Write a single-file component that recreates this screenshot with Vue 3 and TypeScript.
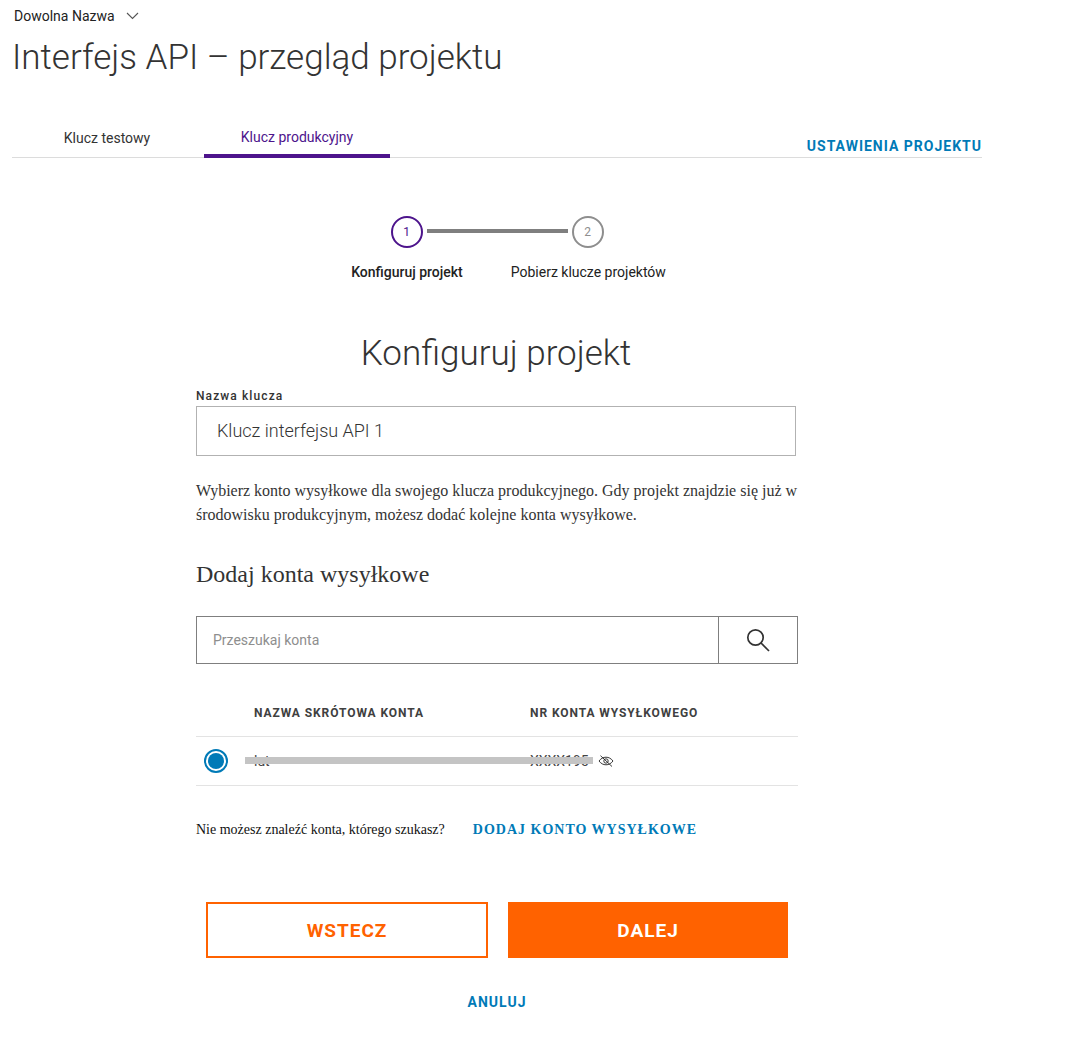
<script setup lang="ts">
const steps = [
  { n: 1, label: 'Konfiguruj projekt', active: true },
  { n: 2, label: 'Pobierz klucze projektów', active: false },
]
</script>

<template>
  <div class="page">
    <div class="switcher">
      <span>Dowolna Nazwa</span>
      <svg width="13" height="8" viewBox="0 0 13 8" fill="none"><path d="M1 1l5.500 5.500L12 1" stroke="#555" stroke-width="1.1" /></svg>
    </div>
    <h1 class="title">Interfejs API – przegląd projektu</h1>

    <div class="tabs">
      <div class="tab tab-test">Klucz testowy</div>
      <div class="tab tab-prod">Klucz produkcyjny</div>
      <a class="settings">USTAWIENIA PROJEKTU</a>
    </div>

    <div class="stepper">
      <div class="circles">
        <div class="circle active">1</div>
        <div class="bar"></div>
        <div class="circle">2</div>
      </div>
      <div class="labels">
        <span v-for="s in steps" :key="s.n" :class="['step-label', { strong: s.active }]">{{ s.label }}</span>
      </div>
    </div>

    <h2 class="form-title">Konfiguruj projekt</h2>

    <div class="form">
      <label class="field-label">Nazwa klucza</label>
      <div class="name-input">Klucz interfejsu API 1</div>
      <p class="desc">Wybierz konto wysyłkowe dla swojego klucza produkcyjnego. Gdy projekt znajdzie się już w środowisku produkcyjnym, możesz dodać kolejne konta wysyłkowe.</p>
      <h3 class="sub">Dodaj konta wysyłkowe</h3>

      <div class="search">
        <div class="search-text">Przeszukaj konta</div>
        <div class="search-btn">
          <svg width="26" height="26" viewBox="0 0 26 26" fill="none" stroke="#333" stroke-width="1.7"><circle cx="10.500" cy="10.500" r="7.700" /><path d="M16 16l8 8" /></svg>
        </div>
      </div>

      <div class="thead">
        <span class="col-name">NAZWA SKRÓTOWA KONTA</span>
        <span class="col-num">NR KONTA WYSYŁKOWEGO</span>
      </div>
      <div class="row">
        <span class="radio"><span class="dot"></span></span>
        <div class="masked">
          <span class="m-name">lut</span>
          <span class="m-num">XXXX195</span>
          <span class="smear"></span>
        </div>
        <svg class="eye" width="16" height="12" viewBox="0 0 16 12" fill="none" stroke="#222" stroke-width="0.9"><path d="M1 6c2-2.600 4.300-3.800 7-3.800S13 3.400 15 6c-2 2.600-4.300 3.800-7 3.800S3 8.600 1 6z" /><circle cx="8" cy="6" r="2.200" /><path d="M2.500 .7l11.500 10.800" /></svg>
      </div>

      <div class="missing">
        <span class="missing-text">Nie możesz znaleźć konta, którego szukasz?</span>
        <a class="add-link">DODAJ KONTO WYSYŁKOWE</a>
      </div>

      <div class="actions">
        <button class="btn outline">WSTECZ</button>
        <button class="btn solid">DALEJ</button>
      </div>
      <a class="cancel">ANULUJ</a>
    </div>
  </div>
</template>

<style>
html, body { margin: 0; background: #fff; }
</style>

<style scoped>
.page {
  width: 970px;
  height: 1046px;
  margin-left: 12px;
  font-family: Roboto, "Liberation Sans", sans-serif;
  color: #333;
  overflow: hidden;
}
.switcher {
  display: flex;
  align-items: center;
  gap: 11px;
  height: 16px;
  margin: 8px 0 0 2px;
  font-size: 14px;
  color: #222;
}
.title {
  margin: 12px 0 0;
  font-size: 35px;
  line-height: 44px;
  font-weight: 300;
  color: #333;
}
.tabs {
  display: flex;
  align-items: flex-end;
  height: 53px;
  margin-top: 24px;
  border-bottom: 1px solid #dcdcdc;
}
.tab {
  height: 53px;
  box-sizing: border-box;
  padding-top: 24px;
  font-size: 14px;
  line-height: 20px;
  text-align: center;
}
.tab-test {
  width: 190px;
  color: #333;
}
.tab-prod {
  width: 186px;
  margin-left: 2px;
  margin-bottom: -1px;
  height: 54px;
  padding-top: 23px;
  color: #4d148c;
  border-bottom: 4px solid #4d148c;
}
.settings {
  margin-left: auto;
  padding-bottom: 1px;
  font-size: 14px;
  font-weight: 700;
  letter-spacing: 1px;
  color: #007ab7;
  line-height: 20px;
}
.stepper {
  display: flex;
  flex-direction: column;
  align-items: center;
  margin-top: 58px;
}
.circles {
  display: flex;
  align-items: center;
  gap: 4px;
  height: 32px;
}
.circle {
  width: 32px;
  height: 32px;
  box-sizing: border-box;
  border: 2px solid #8e8e8e;
  border-radius: 50%;
  display: flex;
  align-items: center;
  justify-content: center;
  font-size: 12px;
  color: #8e8e8e;
}
.circle.active {
  border-color: #4d148c;
  color: #4d148c;
}
.bar {
  width: 141px;
  height: 4px;
  background: #7f7f7f;
  margin-top: -2px;
}
.labels {
  display: flex;
  gap: 48px;
  margin: 15px 0 0 23px;
  font-size: 14px;
  line-height: 18px;
  color: #222;
}
.step-label.strong {
  font-weight: 500;
}
.form-title {
  margin: 51px 0 0 -2px;
  text-align: center;
  font-size: 35px;
  line-height: 44px;
  font-weight: 300;
  color: #333;
}
.form {
  width: 602px;
  margin-left: 184px;
}
.field-label {
  display: block;
  margin-top: 12px;
  font-size: 12px;
  line-height: 16px;
  font-weight: 500;
  letter-spacing: 1.1px;
  color: #333;
}
.name-input {
  box-sizing: border-box;
  width: 600px;
  height: 50px;
  margin-top: 2px;
  padding: 0 20px 2px;
  border: 1px solid #b2b2b2;
  display: flex;
  align-items: center;
  font-size: 18px;
  font-weight: 300;
  color: #333;
}
.desc {
  margin: 23px 0 0;
  width: 604px;
  font-family: "Liberation Serif", serif;
  font-size: 16px;
  line-height: 24px;
  color: #333;
}
.sub {
  margin: 31px 0 0;
  font-family: "Liberation Serif", serif;
  font-size: 24px;
  line-height: 32px;
  font-weight: 400;
  color: #333;
}
.search {
  display: flex;
  height: 48px;
  box-sizing: border-box;
  margin-top: 26px;
  border: 1px solid #7f7f7f;
}
.search-text {
  flex: 1;
  display: flex;
  align-items: center;
  padding-left: 16px;
  font-size: 14px;
  color: #8e8e8e;
}
.search-btn {
  width: 78px;
  border-left: 1px solid #7f7f7f;
  display: flex;
  align-items: center;
  justify-content: center;
}
.thead {
  display: flex;
  height: 73px;
  box-sizing: border-box;
  padding: 41px 0 0 58px;
  border-bottom: 1px solid #e3e3e3;
  font-size: 12px;
  line-height: 16px;
  font-weight: 700;
  letter-spacing: 0.92px;
  color: #404040;
}
.col-name {
  width: 276px;
}
.row {
  display: flex;
  align-items: center;
  height: 49px;
  box-sizing: border-box;
  border-bottom: 1px solid #e3e3e3;
  padding-left: 8px;
}
.radio {
  width: 24px;
  height: 24px;
  box-sizing: border-box;
  border: 2px solid #007ab7;
  border-radius: 50%;
  display: flex;
  align-items: center;
  justify-content: center;
}
.dot {
  width: 16px;
  height: 16px;
  border-radius: 50%;
  background: #007ab7;
}
.masked {
  position: relative;
  width: 349px;
  height: 24px;
  margin-left: 17px;
  font-size: 14px;
  line-height: 24px;
  color: #444;
}
.m-name {
  position: absolute;
  left: 9px;
  top: 0;
}
.m-num {
  position: absolute;
  left: 285px;
  top: 0;
}
.smear {
  position: absolute;
  left: 0;
  top: 8px;
  width: 348px;
  height: 7px;
  background: #c4c4c4;
}
.eye {
  margin-left: 4px;
}
.missing {
  display: flex;
  align-items: center;
  gap: 28px;
  margin-top: 33px;
  height: 22px;
  font-family: "Liberation Serif", serif;
}
.missing-text {
  font-size: 14px;
  color: #111;
}
.add-link {
  font-size: 14px;
  font-weight: 700;
  letter-spacing: 1px;
  color: #007ab7;
}
.actions {
  display: flex;
  gap: 20px;
  margin: 61px 0 0 10px;
}
.btn {
  width: 282px;
  height: 56px;
  box-sizing: border-box;
  font-family: Roboto, "Liberation Sans", sans-serif;
  font-size: 19px;
  font-weight: 700;
  letter-spacing: 1px;
  border: 2px solid #ff6200;
  padding: 0;
}
.outline {
  background: #fff;
  color: #ff6200;
}
.solid {
  width: 280px;
  background: #ff6200;
  color: #fff;
}
.cancel {
  display: block;
  width: 602px;
  margin-top: 34px;
  text-align: center;
  font-size: 14px;
  line-height: 20px;
  font-weight: 700;
  letter-spacing: 1px;
  color: #007ab7;
}
</style>
